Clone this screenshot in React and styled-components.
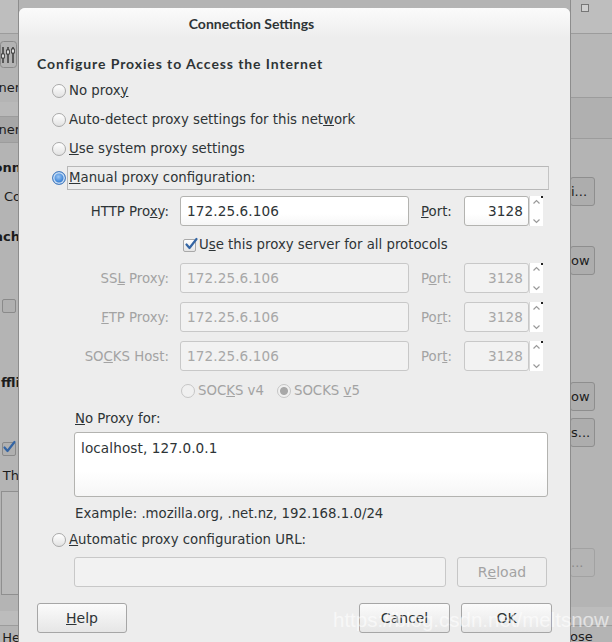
import React from 'react';
import styled, { createGlobalStyle } from 'styled-components';

const GlobalStyle = createGlobalStyle`
    html, body {
        margin: 0;
        padding: 0;
        background: #b4b4b4;
        overflow: hidden;
    }
    body {
        font-family: "DejaVu Sans", "Liberation Sans", sans-serif;
        font-size: 13.3px;
        color: #2e3436;
    }
`;

const Page = styled.div`
    position: relative;
    width: 612px;
    height: 642px;
    overflow: hidden;
    display: flex;
    background: #b4b4b4;
`;

/* ---------- window behind the dialog ---------- */

const Strip = styled.div`
    width: ${props => props.w}px;
    flex-shrink: 0;
    overflow: hidden;
    display: flex;
    flex-direction: column;
    align-items: ${props => (props.right ? 'flex-start' : 'flex-end')};
    position: relative;
`;

const BackBar = styled.div`
    align-self: stretch;
    height: ${props => props.h}px;
    margin-top: ${props => props.mt || 0}px;
    background: ${props => props.bg || '#bdbdbd'};
    border-bottom: ${props => (props.line ? '1px solid #9c9c9c' : 'none')};
    display: flex;
    align-items: center;
    justify-content: ${props => (props.right ? 'flex-start' : 'flex-end')};
    flex-shrink: 0;
`;

const BackText = styled.div`
    white-space: nowrap;
    margin-top: ${props => props.mt || 0}px;
    font-weight: ${props => (props.bold ? 'bold' : 'normal')};
    color: #1c1c1c;
    line-height: 16px;
    font-size: 13px;
    margin-right: ${props => props.mr || 0}px;
    margin-left: ${props => props.ml || 0}px;
`;

const BackButton = styled.div`
    width: ${props => props.w || 40}px;
    height: ${props => props.h || 29}px;
    margin-top: ${props => props.mt || 0}px;
    border: 1px solid;
    border-radius: 3px;
    background: ${props => (props.dim ? '#b4b4b4' : '#adadad')};
    border-color: ${props => (props.dim ? '#a2a2a2' : '#8e8e8e')};
    box-sizing: border-box;
    display: flex;
    align-items: center;
    justify-content: flex-start;
    font-size: 13px;
    color: ${props => (props.dim ? '#8a8a8a' : '#1c1c1c')};
    white-space: nowrap;
    overflow: hidden;
    flex-shrink: 0;
`;

const BackCheck = styled.div`
    width: 12px;
    height: 12px;
    margin-top: ${props => props.mt}px;
    margin-right: 3px;
    border: 1px solid #8a8a8a;
    border-radius: 2px;
    background: #b0b0b0;
    position: relative;
    flex-shrink: 0;
    svg {
        position: absolute;
        left: -1px;
        top: -3px;
    }
`;

const BackList = styled.div`
    width: 17px;
    height: 102px;
    margin-top: ${props => props.mt}px;
    border: 1px solid #8f8f8f;
    border-right: none;
    background: #b9b9b9;
    flex-shrink: 0;
`;

const Edge = styled.div`
    position: absolute;
    top: 0;
    bottom: 0;
    ${props => (props.right ? 'left: 0;' : 'right: 0;')}
    width: 1px;
    background: #8d8d8d;
`;

/* ---------- dialog ---------- */

const Dialog = styled.div`
    width: 551px;
    flex-shrink: 0;
    margin-top: 8px;
    height: 700px;
    background: #ededed;
    border-radius: 6px 6px 0 0;
    display: flex;
    flex-direction: column;
`;

const TitleBar = styled.div`
    height: 30px;
    flex-shrink: 0;
    border-radius: 6px 6px 0 0;
    background: linear-gradient(#fbfbfb, #ededed);
    display: flex;
    align-items: center;
    justify-content: center;
    font-family: Lato, "DejaVu Sans", sans-serif;
    font-weight: bold;
    font-size: 14px;
    color: #2e3436;
    padding: 1px 86px 0 0;
    box-sizing: border-box;
`;

const Body = styled.div`
    padding: 0 18px;
    display: flex;
    flex-direction: column;
`;

const Heading = styled.div`
    margin-top: 17px;
    height: 17px;
    line-height: 17px;
    font-family: Lato, "DejaVu Sans", sans-serif;
    font-weight: bold;
    font-size: 14px;
    letter-spacing: 0.9px;
`;

const OptionRow = styled.div`
    display: flex;
    align-items: center;
    height: 29px;
    margin-left: 15px;
    margin-top: ${props => props.mt || 0}px;
    flex-shrink: 0;
`;

const Radio = styled.span`
    width: 14px;
    height: 14px;
    box-sizing: border-box;
    border-radius: 50%;
    flex-shrink: 0;
    border: 1px solid ${props => (props.checked && !props.disabled ? '#4a7fc0' : props.disabled ? '#c6c6c6' : '#a9a9a9')};
    background: ${props =>
        props.checked
            ? props.disabled
                ? 'radial-gradient(circle, #a8a8a8 0 3.5px, #f0f0f0 4.5px)'
                : 'radial-gradient(circle at 45% 40%, #9cc7f5 0, #3f86d8 5px, #2f6fc0 6px)'
            : props.disabled
            ? '#f0f0f0'
            : 'linear-gradient(#ffffff, #e2e2e2)'};
    box-shadow: ${props => (props.checked && !props.disabled ? 'inset 0 0 0 1.5px #c9def5' : 'none')};
`;

const OptionLabel = styled.span`
    margin-left: ${props => (props.flush ? 0 : 3)}px;
    white-space: nowrap;
    color: ${props => (props.disabled ? '#a3a3a3' : '#2e3436')};
    line-height: 20px;
`;

const FocusBox = styled.div`
    margin-left: 1px;
    flex: 1;
    height: 24px;
    box-sizing: border-box;
    border: 1px solid #b8b8b8;
    border-right-color: #c4c4c4;
    display: flex;
    align-items: center;
    padding-left: 1px;
    margin-right: 3px;
`;

const ProxyRow = styled.div`
    display: flex;
    align-items: center;
    height: 30px;
    margin-left: 38px;
    margin-top: ${props => props.mt || 0}px;
    flex-shrink: 0;
`;

const FieldLabel = styled.span`
    width: 94px;
    text-align: right;
    white-space: nowrap;
    color: ${props => (props.disabled ? '#a3a3a3' : '#2e3436')};
    margin-right: 11px;
    flex-shrink: 0;
`;

const Input = styled.div`
    width: ${props => props.w}px;
    height: ${props => props.h || 30}px;
    box-sizing: border-box;
    border: 1px solid ${props => (props.disabled ? '#c8c8c8' : '#b3b3b0')};
    border-radius: 3px;
    background: ${props => (props.disabled ? '#f2f2f2' : 'linear-gradient(#ffffff 60%, #f6f6f6)')};
    color: ${props => (props.disabled ? '#a8a8a8' : '#2e3436')};
    display: flex;
    align-items: ${props => (props.top ? 'flex-start' : 'center')};
    justify-content: ${props => (props.num ? 'flex-end' : 'flex-start')};
    padding: ${props => (props.top ? '7px 6px' : props.num ? '0 5px' : '0 6px')};
    font-size: 13.6px;
    letter-spacing: 0.1px;
    flex-shrink: 0;
    white-space: nowrap;
`;

const PortLabel = styled.span`
    width: 43px;
    margin-left: 12px;
    white-space: nowrap;
    color: ${props => (props.disabled ? '#a3a3a3' : '#2e3436')};
    flex-shrink: 0;
`;

const Spinner = styled.div`
    width: 14px;
    height: 30px;
    box-sizing: border-box;
    background: #ffffff;
    border-left: 1px solid #d8d8d8;
    display: flex;
    flex-direction: column;
    align-items: center;
    justify-content: space-between;
    position: relative;
    padding: 3px 0 2px;
    flex-shrink: 0;
`;

const SpinDot = styled.span`
    position: absolute;
    top: 0;
    right: 0;
    width: 2px;
    height: 2px;
    background: #222;
`;

const CheckRow = styled.div`
    display: flex;
    align-items: center;
    height: 24px;
    margin-left: 146px;
    margin-top: 7px;
    flex-shrink: 0;
`;

const CheckBox = styled.span`
    width: 13px;
    height: 13px;
    box-sizing: border-box;
    border: 1px solid #a9a9a9;
    border-radius: 2px;
    background: linear-gradient(#ffffff, #e4e4e4);
    position: relative;
    flex-shrink: 0;
    svg {
        position: absolute;
        left: 0;
        top: -3px;
    }
`;

const SocksRow = styled.div`
    display: flex;
    align-items: center;
    height: 24px;
    margin-left: 144px;
    margin-top: 8px;
    flex-shrink: 0;
`;

const SocksItem = styled.span`
    display: flex;
    align-items: center;
    margin-right: ${props => props.mr || 0}px;
`;

const PlainText = styled.div`
    margin-left: ${props => props.ml}px;
    margin-top: ${props => props.mt}px;
    height: 20px;
    line-height: 20px;
    white-space: nowrap;
    flex-shrink: 0;
`;

const AreaWrap = styled.div`
    margin-left: 37px;
    margin-top: ${props => props.mt}px;
    flex-shrink: 0;
`;

const UrlRow = styled.div`
    display: flex;
    align-items: center;
    margin-left: 37px;
    margin-top: 3px;
    gap: 11px;
    flex-shrink: 0;
`;

const Button = styled.div`
    width: ${props => props.w || 91}px;
    height: 30px;
    box-sizing: border-box;
    border: 1px solid ${props => (props.disabled ? '#c6c6c6' : '#a6a6a6')};
    border-radius: 3px;
    background: ${props => (props.disabled ? '#efefef' : 'linear-gradient(#fbfbfb, #e6e6e6)')};
    color: ${props => (props.disabled ? '#a3a3a3' : '#2e3436')};
    display: flex;
    align-items: center;
    justify-content: center;
    font-size: 14px;
    flex-shrink: 0;
`;

const ButtonBar = styled.div`
    display: flex;
    align-items: center;
    margin-top: 16px;
    gap: 11px;
    flex-shrink: 0;
`;

const Spacer = styled.div`
    flex: 1;
`;

const Watermark = styled.div`
    position: absolute;
    left: 333px;
    top: 608px;
    font-family: "Liberation Sans", sans-serif;
    font-size: 20.5px;
    color: rgba(255, 255, 255, 0.6);
    white-space: nowrap;
    pointer-events: none;
`;

const Chevron = ({ up }) => (
    <svg width="9" height="6" viewBox="0 0 9 6">
        <path
            d={up ? 'M1.5 4.5 L4.5 1.5 L7.5 4.5' : 'M1.5 1.5 L4.5 4.5 L7.5 1.5'}
            fill="none"
            stroke="#9a9a9a"
            strokeWidth="1.2"
        />
    </svg>
);

const Tick = () => (
    <svg width="14" height="14" viewBox="0 0 14 14">
        <path d="M2.5 7.5 L5.5 11 L12.5 2" fill="none" stroke="#3465a4" strokeWidth="2.2" strokeLinecap="round" strokeLinejoin="round" />
    </svg>
);

const Sliders = () => (
    <svg width="17" height="27" viewBox="0 0 17 27">
        <rect x="0.5" y="0.5" width="16" height="26" rx="3" fill="#b3b3b3" stroke="#8a8a8a" />
        <path d="M3 6 V22 M8 6 V22 M13 6 V22" stroke="#333" strokeWidth="1.4" />
        <rect x="1.5" y="13" width="3" height="4" fill="#ddd" stroke="#333" strokeWidth="0.8" />
        <rect x="6.5" y="9" width="3" height="4" fill="#ddd" stroke="#333" strokeWidth="0.8" />
        <rect x="11.5" y="8" width="3" height="4" fill="#ddd" stroke="#333" strokeWidth="0.8" />
    </svg>
);

const PortField = ({ disabled }) => (
    <>
        <Input w={65} num disabled={disabled}>3128</Input>
        <Spinner>
            <SpinDot />
            <Chevron up />
            <Chevron />
        </Spinner>
    </>
);

const ProxyField = ({ label, portLabel, disabled, mt }) => (
    <ProxyRow mt={mt}>
        <FieldLabel disabled={disabled}>{label}</FieldLabel>
        <Input w={229} disabled={disabled}>172.25.6.106</Input>
        <PortLabel disabled={disabled}>{portLabel}</PortLabel>
        <PortField disabled={disabled} />
    </ProxyRow>
);

const App = () => {
    return (
        <Page>
            <GlobalStyle />
            <Strip w={19}>
                <Edge />
                <BackBar h={33} bg="#bebebe" line />
                <BackText mt={7} mr={2}><Sliders /></BackText>
                <BackText mt={8} mr={-1}>ner</BackText>
                <BackBar h={14} mt={6} bg="#b9b9b9" line />
                <BackBar h={25} bg="#a7a7a7" line>
                    <BackText mr={-1}>ner</BackText>
                </BackBar>
                <BackText bold mt={17} mr={-2}>onn</BackText>
                <BackText mt={13} mr={-2}>Co</BackText>
                <BackText bold mt={24} mr={-1}>ach</BackText>
                <BackCheck mt={54} />
                <BackText bold mt={62} mr={-1}>ffli</BackText>
                <BackCheck mt={51}><Tick /></BackCheck>
                <BackText mt={12} mr={0}>Th</BackText>
                <BackList mt={7} />
                <BackBar h={14} mt={16} bg="#bcbcbc" line />
                <BackText mt={4} mr={-1}><u>H</u>e</BackText>
            </Strip>

            <Dialog>
                <TitleBar>Connection Settings</TitleBar>
                <Body>
                    <Heading>Configure Proxies to Access the Internet</Heading>
                    <OptionRow mt={4}>
                        <Radio />
                        <OptionLabel>No prox<u>y</u></OptionLabel>
                    </OptionRow>
                    <OptionRow>
                        <Radio />
                        <OptionLabel>Auto-detect proxy settings for this net<u>w</u>ork</OptionLabel>
                    </OptionRow>
                    <OptionRow>
                        <Radio />
                        <OptionLabel><u>U</u>se system proxy settings</OptionLabel>
                    </OptionRow>
                    <OptionRow>
                        <Radio checked />
                        <FocusBox>
                            <OptionLabel flush><u>M</u>anual proxy configuration:</OptionLabel>
                        </FocusBox>
                    </OptionRow>
                    <ProxyField label={<>HTTP Pro<u>x</u>y:</>} portLabel={<><u>P</u>ort:</>} mt={4} />
                    <CheckRow>
                        <CheckBox><Tick /></CheckBox>
                        <OptionLabel>U<u>s</u>e this proxy server for all protocols</OptionLabel>
                    </CheckRow>
                    <ProxyField disabled label={<>SS<u>L</u> Proxy:</>} portLabel={<>P<u>o</u>rt:</>} mt={6} />
                    <ProxyField disabled label={<><u>F</u>TP Proxy:</>} portLabel={<>Po<u>r</u>t:</>} mt={9} />
                    <ProxyField disabled label={<>SO<u>C</u>KS Host:</>} portLabel={<>Por<u>t</u>:</>} mt={9} />
                    <SocksRow>
                        <SocksItem mr={13}>
                            <Radio disabled />
                            <OptionLabel disabled>SOC<u>K</u>S v4</OptionLabel>
                        </SocksItem>
                        <SocksItem>
                            <Radio disabled checked />
                            <OptionLabel disabled>SOCKS <u>v</u>5</OptionLabel>
                        </SocksItem>
                    </SocksRow>
                    <PlainText ml={38} mt={6}><u>N</u>o Proxy for:</PlainText>
                    <AreaWrap mt={3}>
                        <Input w={474} h={65} top>localhost, 127.0.0.1</Input>
                    </AreaWrap>
                    <PlainText ml={38} mt={7}>Example: .mozilla.org, .net.nz, 192.168.1.0/24</PlainText>
                    <OptionRow mt={1}>
                        <Radio />
                        <OptionLabel><u>A</u>utomatic proxy configuration URL:</OptionLabel>
                    </OptionRow>
                    <UrlRow>
                        <Input w={372} disabled />
                        <Button w={90} disabled>R<u>e</u>load</Button>
                    </UrlRow>
                    <ButtonBar>
                        <Button w={90}><u>H</u>elp</Button>
                        <Spacer />
                        <Button>Cancel</Button>
                        <Button>OK</Button>
                    </ButtonBar>
                </Body>
            </Dialog>

            <Strip w={42} right>
                <Edge right />
                <BackBar h={33} bg="#bebebe" line right>
                    <BackText ml={10} style={{ marginTop: -16 }}>
                        <svg width="10" height="10" viewBox="0 0 10 10">
                            <rect x="1.5" y="1.5" width="7" height="7" fill="#d0d0d0" stroke="#777" />
                        </svg>
                    </BackText>
                </BackBar>
                <BackBar h={63} bg="#b7b7b7" line />
                <BackBar h={40} bg="#b0b0b0" line />
                <BackButton mt={38} w={25}>i...</BackButton>
                <BackButton mt={40} w={25}>ow</BackButton>
                <BackButton mt={107} w={25}>ow</BackButton>
                <BackButton mt={7} w={25}>s...</BackButton>
                <BackButton mt={101} w={25} dim>...</BackButton>
                <BackBar h={18} mt={30} bg="#bcbcbc" line />
                <BackText mt={3}>ose</BackText>
            </Strip>

            <Watermark>https://blog.csdn.net/meltsnow</Watermark>
        </Page>
    );
};

export default App;
